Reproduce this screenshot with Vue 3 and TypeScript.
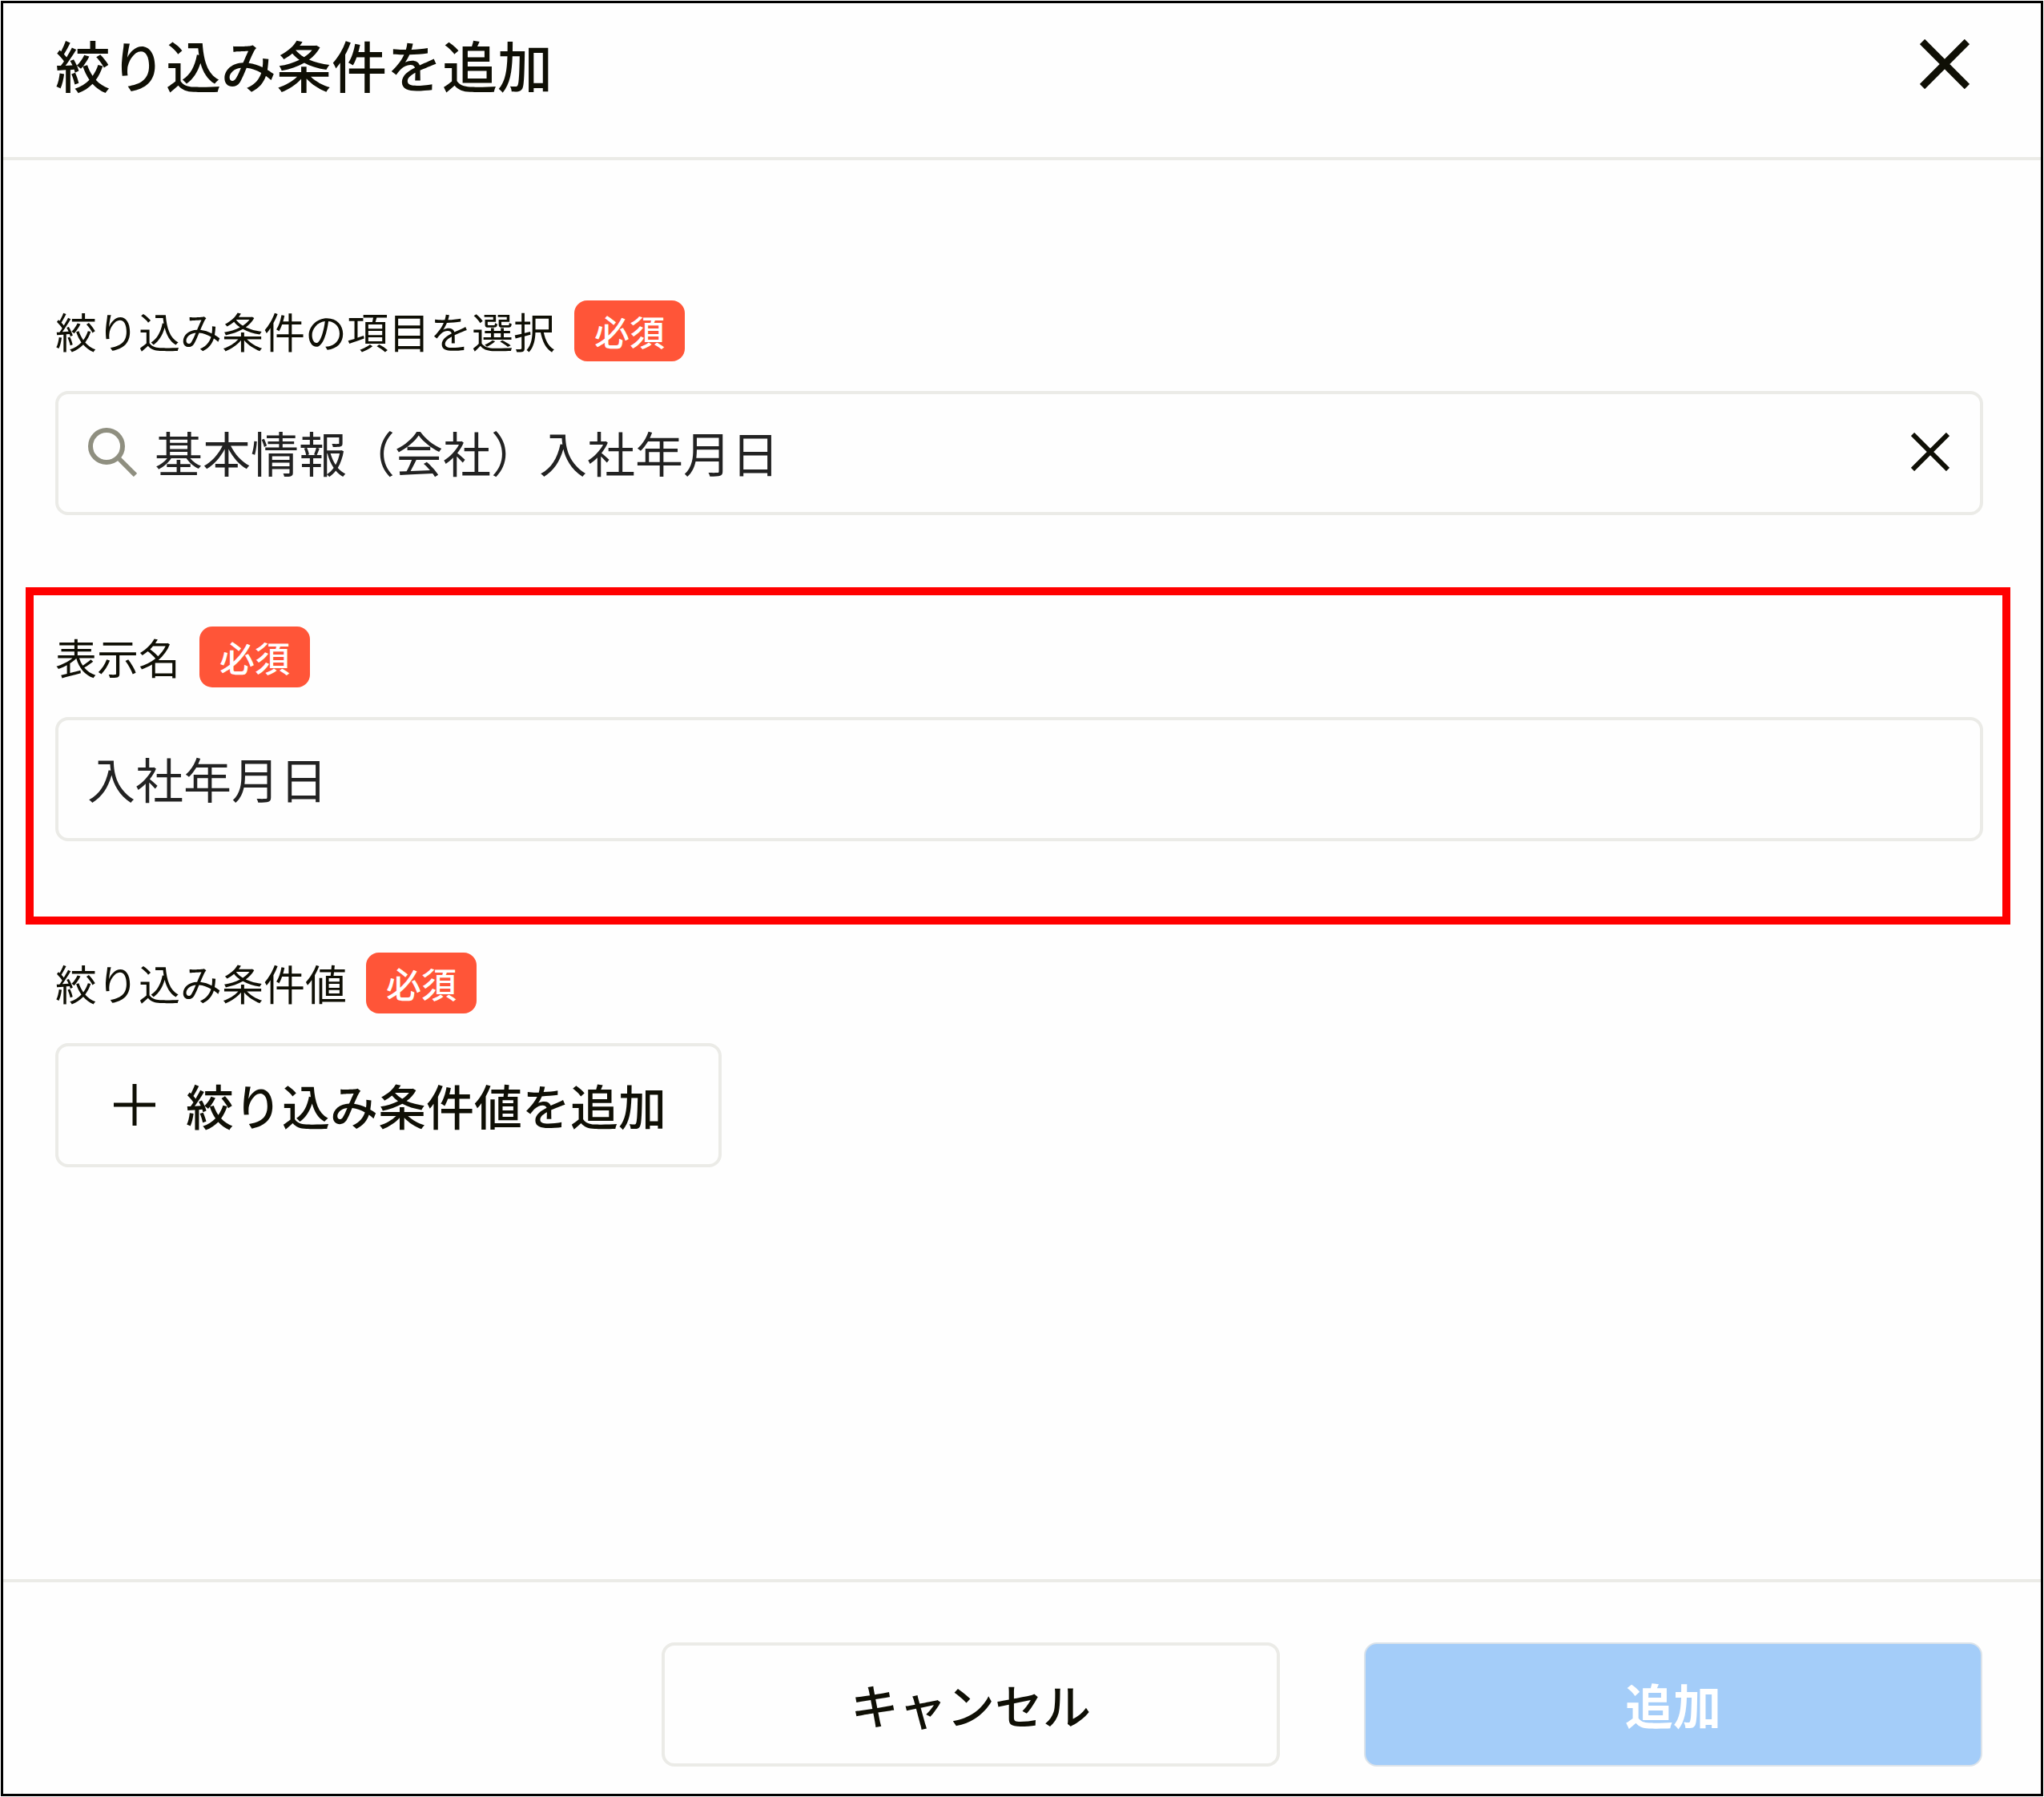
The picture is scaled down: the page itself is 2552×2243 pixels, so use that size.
<script setup lang="ts">
import { ref } from 'vue'

const targetItem = ref('基本情報（会社）入社年月日')
const displayName = ref('入社年月日')

function clearTarget(): void {
  targetItem.value = ''
}
</script>

<template>
  <form class="dialog" role="dialog" aria-labelledby="dialog-title" @submit.prevent>
    <header class="dialog-header">
      <h1 id="dialog-title" class="dialog-title">絞り込み条件を追加</h1>
      <button class="icon-button" type="button" aria-label="閉じる">
        <svg class="close-icon" viewBox="0 0 62 62" aria-hidden="true">
          <path d="M3 3 59 59M59 3 3 59" />
        </svg>
      </button>
    </header>

    <main class="dialog-body">
      <section class="field">
        <div class="field-heading">
          <label class="field-label" for="target-item">絞り込み条件の項目を選択</label>
          <span class="badge">必須</span>
        </div>
        <div class="control">
          <svg class="search-icon" viewBox="0 0 62 62" aria-hidden="true">
            <circle cx="24" cy="24" r="20" />
            <path d="M38 38 60 60" />
          </svg>
          <input id="target-item" v-model="targetItem" class="control-input" type="text" required />
          <button class="icon-button" type="button" aria-label="クリア" @click="clearTarget">
            <svg class="clear-icon" viewBox="0 0 48 48" aria-hidden="true">
              <path d="M2 2 46 46M46 2 2 46" />
            </svg>
          </button>
        </div>
      </section>

      <section class="field field-highlighted">
        <div class="field-heading">
          <label class="field-label" for="display-name">表示名</label>
          <span class="badge">必須</span>
        </div>
        <div class="control">
          <input id="display-name" v-model="displayName" class="control-input" type="text" required />
        </div>
      </section>

      <section class="field">
        <div class="field-heading">
          <span id="value-label" class="field-label">絞り込み条件値</span>
          <span class="badge">必須</span>
        </div>
        <button class="button button-add" type="button" aria-describedby="value-label">
          <svg class="plus-icon" viewBox="0 0 52 52" aria-hidden="true">
            <path d="M26 0V52M0 26H52" />
          </svg>
          絞り込み条件値を追加
        </button>
      </section>
    </main>

    <footer class="dialog-footer">
      <button class="button button-action" type="button">キャンセル</button>
      <button class="button button-action button-primary" type="submit" disabled>追加</button>
    </footer>
  </form>
</template>

<style>
body {
  background: #fefefe;
}
</style>

<style scoped>
.dialog,
.dialog * {
  box-sizing: border-box;
}

.dialog {
  display: flex;
  flex-direction: column;
  min-height: calc(100vh - 2px);
  margin: 1px;
  border: 3px solid #000;
  background: #fefefe;
  color: #0f0f05;
  font-family: 'Noto Sans CJK JP', sans-serif;
}

.dialog-header {
  display: flex;
  align-items: center;
  justify-content: space-between;
  height: 196px;
  padding: 0 89px 41px 65px;
  border-bottom: 4px solid #ebebe7;
}

.dialog-title {
  margin: 0;
  font-size: 69px;
  font-weight: 500;
  line-height: 72px;
}

.icon-button {
  display: flex;
  padding: 0;
  border: 0;
  background: none;
  color: inherit;
}

svg {
  flex: none;
  fill: none;
  stroke: currentColor;
}

.close-icon {
  width: 62px;
  height: 62px;
  stroke-width: 9px;
}

.clear-icon {
  width: 48px;
  height: 48px;
  stroke-width: 6px;
}

.search-icon {
  width: 62px;
  height: 62px;
  margin-right: 22px;
  color: #8f8f80;
  stroke-width: 6px;
}

.plus-icon {
  width: 52px;
  height: 52px;
  stroke-width: 5px;
}

.dialog-body {
  display: flex;
  flex: 1;
  flex-direction: column;
  gap: 139px;
  padding: 175px 72px 139px 65px;
}

.field {
  display: flex;
  flex-direction: column;
  align-items: flex-start;
  gap: 37px;
}

/* Red frame drawn around the field being explained */
.field-highlighted {
  position: relative;
}

.field-highlighted::after {
  position: absolute;
  inset: -49px -34px -104px -37px;
  border: 10px solid #f00;
  content: '';
  pointer-events: none;
}

.field-heading {
  display: flex;
  align-items: center;
  gap: 24px;
}

.field-label {
  font-size: 52px;
  line-height: 76px;
}

.badge {
  padding: 0 25px;
  border-radius: 16px;
  background: #ff5538;
  color: #fff;
  font-size: 44px;
  font-weight: 500;
  line-height: 76px;
}

.control {
  display: flex;
  align-items: center;
  width: 100%;
  height: 155px;
  padding: 0 38px 4px 36px;
  border: 4px solid #ebebe7;
  border-radius: 16px;
}

.control-input {
  flex: 1;
  min-width: 0;
  padding: 0;
  border: 0;
  outline: 0;
  background: none;
  color: #222;
  font-family: inherit;
  font-size: 60px;
  line-height: 88px;
}

.button {
  display: flex;
  align-items: center;
  justify-content: center;
  height: 155px;
  padding: 0 0 2px;
  border: 4px solid #ebebe7;
  border-radius: 16px;
  background: #fefefe;
  color: inherit;
  font-family: inherit;
  font-size: 60px;
  font-weight: 500;
  line-height: 88px;
}

.button-add {
  gap: 38px;
  padding: 0 65px 2px 69px;
}

.dialog-footer {
  display: flex;
  justify-content: flex-end;
  gap: 105px;
  padding: 75px 73px 34px;
  border-top: 4px solid #ebebe7;
}

.button-action {
  width: 772px;
}

.button-primary {
  border: 2px solid #dbe3ea;
  background: #a4cdf9;
  color: #fff;
  font-weight: 700;
}
</style>
